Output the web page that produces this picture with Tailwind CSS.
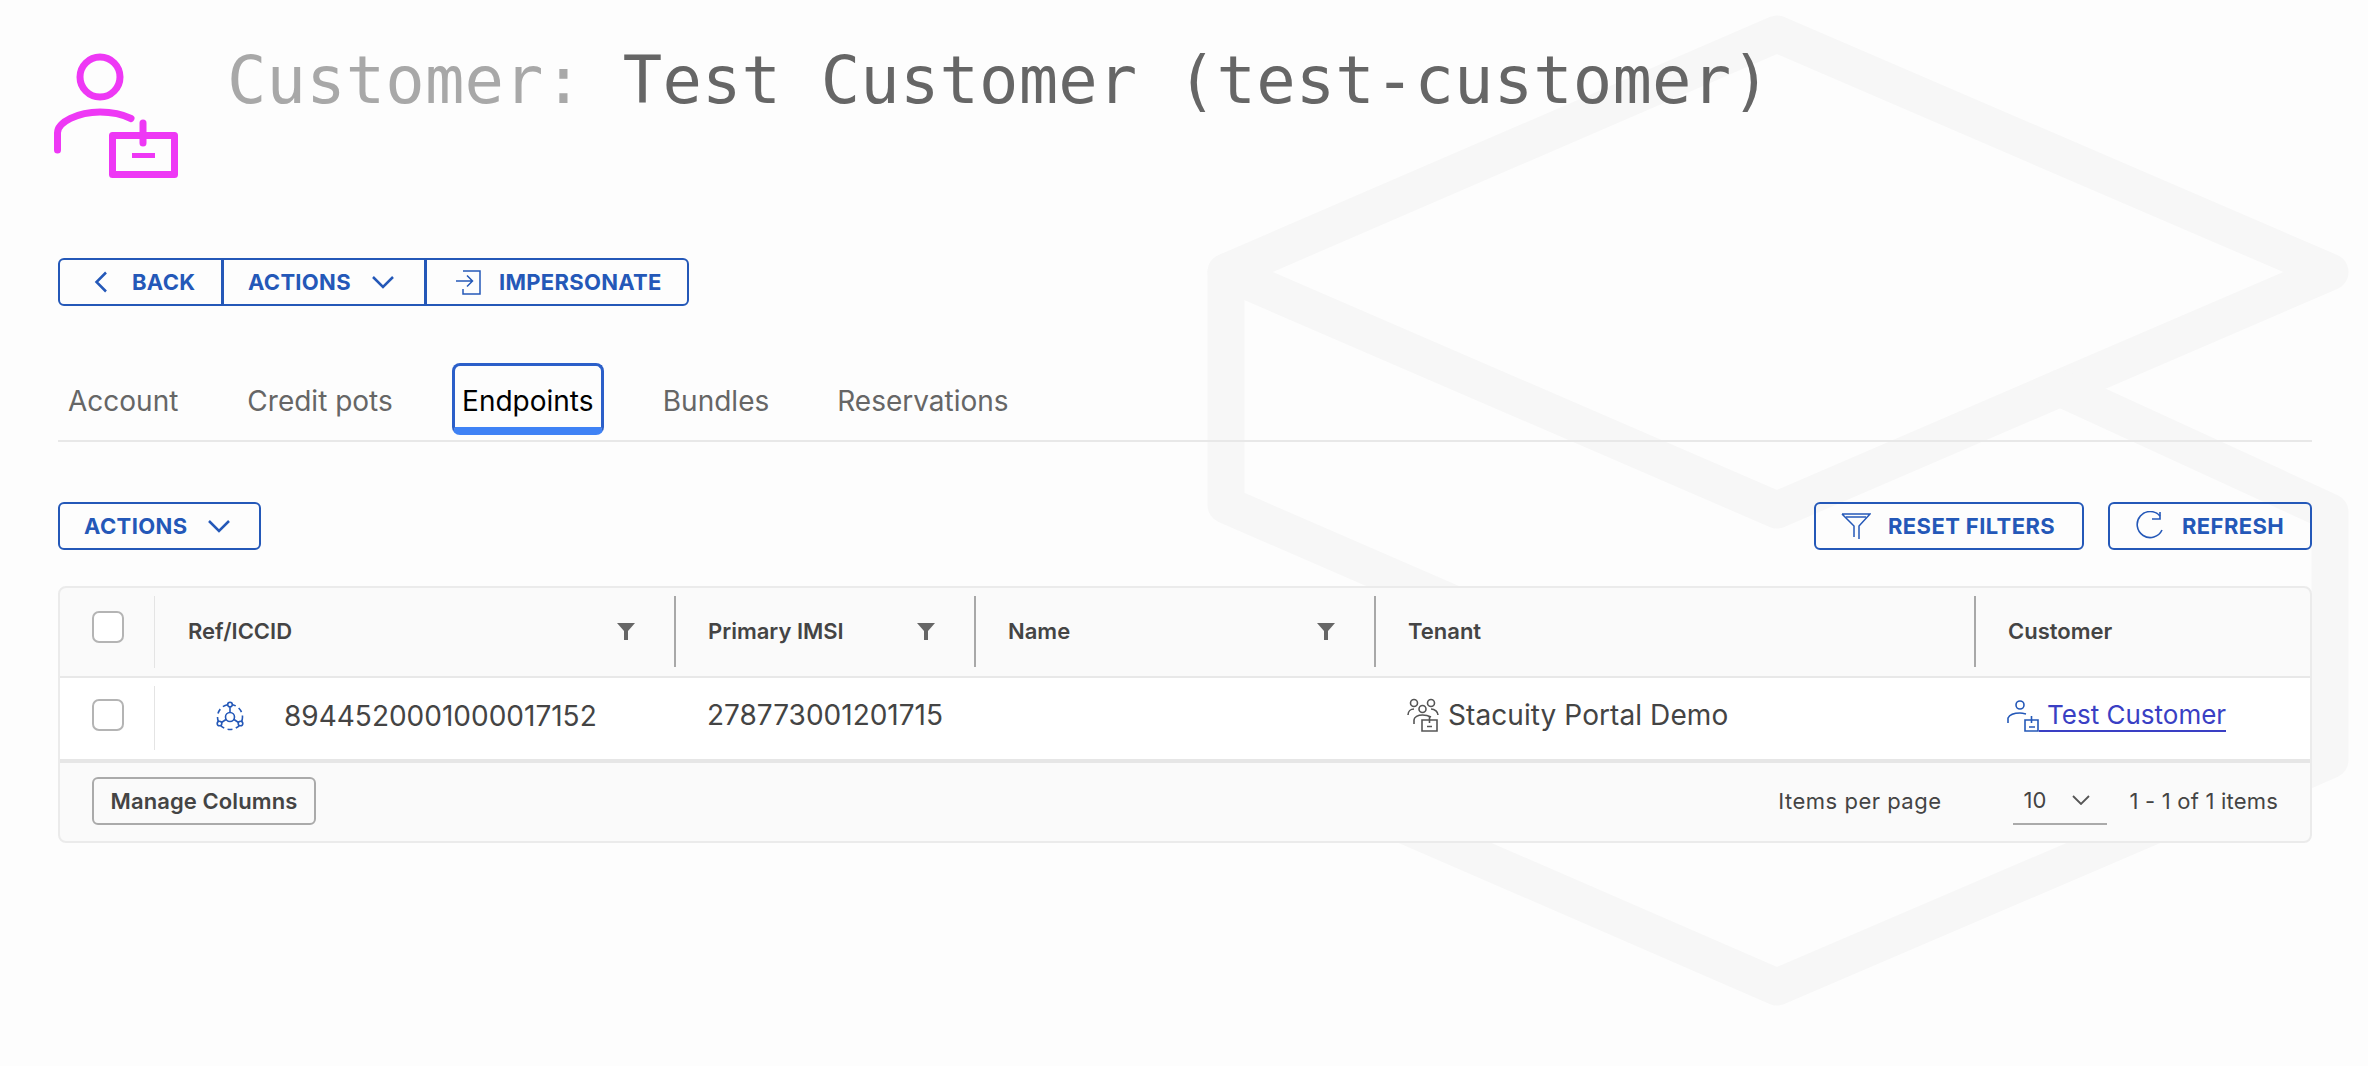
<!DOCTYPE html>
<html lang="en">
<head>
    <meta charset="UTF-8">
    <title>Customer: Test Customer</title>
    <script src="https://cdn.jsdelivr.net/npm/@tailwindcss/browser@4"></script>
</head>
<body class="relative w-[2368px] h-[1066px] overflow-hidden bg-[#fdfdfd] text-[#444] font-['Inter','Liberation_Sans',sans-serif]">

    <!-- Watermark logo behind the page -->
    <svg class="absolute left-0 top-0" width="2368" height="1066" viewBox="0 0 2368 1066" fill="none" stroke="#f7f7f7" stroke-width="37" stroke-linejoin="round" stroke-linecap="round">
        <path d="M1777 34 L2330 272 L1777 510 L1226 272 Z"/>
        <path d="M1226 272 V505 L1500 624"/>
        <path d="M2060 388 L2330 512 V760 L2250 795"/>
        <path d="M1330 793 L1777 987 L2230 793"/>
    </svg>

    <div class="relative">
        <!-- Title -->
        <header class="flex h-[200px] pl-[30px] pt-[30px]">
            <svg width="170" height="170" viewBox="0 0 170 170" fill="none" stroke="#ee38f5" stroke-width="7" stroke-linecap="round" class="shrink-0">
                <circle cx="70" cy="47" r="20"/>
                <path d="M27.500 120 V103 C27.500 92 48 82 70 82 C81 82 92 84 101 88.500"/>
                <path d="M82.500 105.500 H144.500 V144.500 H82.500 Z" stroke-linejoin="round"/>
                <path d="M113 93 V113"/>
                <path d="M102 125.500 H125" stroke-linecap="butt" stroke-width="5"/>
            </svg>
            <h1 class="ml-[27px] mt-[15px] h-[70px] font-['DejaVu_Sans_Mono',monospace] text-[65.500px] leading-[70px] tracking-[0.15px] whitespace-nowrap text-[#666]"><span class="text-[#a8a8a8]">Customer:</span> Test Customer (test-customer)</h1>
        </header>

        <main class="pl-[58px] pr-[56px]">
            <!-- Button group -->
            <div class="mt-[58px] flex h-[48px] w-[631px] rounded-[6px] border-2 border-[#2458b8] text-[22px] font-bold tracking-[0.3px] text-[#2458b8]">
                <button class="flex w-[161px] items-center pl-[33px]">
                    <svg width="16" height="22" viewBox="0 0 16 22" fill="none" stroke="currentColor" stroke-width="2.5"><path d="M13 1.5 L3.5 11 L13 20.5"/></svg>
                    <span class="ml-[23px]">BACK</span>
                </button>
                <button class="flex w-[203px] items-center border-l-3 border-[#2458b8] pl-[24px]">
                    <span>ACTIONS</span>
                    <svg class="ml-[20px]" width="24" height="14" viewBox="0 0 24 14" fill="none" stroke="currentColor" stroke-width="2.5"><path d="M2 2 L12 12 L22 2"/></svg>
                </button>
                <button class="flex flex-1 items-center border-l-3 border-[#2458b8] pl-[28px]">
                    <svg width="26" height="26" viewBox="0 0 26 26" fill="none" stroke="currentColor" stroke-width="1.5"><path d="M8 2 H25 V25 H8 V20"/><path d="M1 12 H17 M12 6.5 L17.5 12 L12 17.5"/></svg>
                    <span class="ml-[18px]">IMPERSONATE</span>
                </button>
            </div>

            <!-- Tabs -->
            <nav class="mt-[57px] flex h-[79px] items-start border-b-2 border-[#e8e8e8] text-[28px] text-[#666]">
                <a class="ml-[10px] mt-[17px]">Account</a>
                <a class="ml-[69px] mt-[17px]">Credit pots</a>
                <a class="ml-[59px] flex h-[72px] w-[152px] items-start justify-center rounded-[8px] border-3 border-b-[8px] border-[#2b5fc9] border-b-[#3f82f5] pt-[14px] text-black">Endpoints</a>
                <a class="ml-[59px] mt-[17px]">Bundles</a>
                <a class="ml-[68px] mt-[17px]">Reservations</a>
            </nav>

            <!-- Toolbar -->
            <div class="mt-[60px] flex h-[48px] justify-between text-[22px] font-bold tracking-[0.4px] text-[#2458b8]">
                <button class="flex w-[203px] items-center rounded-[6px] border-2 border-[#2458b8] pl-[24px]">
                    <span>ACTIONS</span>
                    <svg class="ml-[19px]" width="24" height="14" viewBox="0 0 24 14" fill="none" stroke="currentColor" stroke-width="2.5"><path d="M2 2 L12 12 L22 2"/></svg>
                </button>
                <div class="flex gap-[24px]">
                    <button class="flex w-[270px] items-center rounded-[6px] border-2 border-[#2458b8] pl-[25px]">
                        <svg width="30" height="28" viewBox="0 0 30 28" fill="none" stroke="currentColor" stroke-width="1.5"><path d="M1 2 H29 L18 14 V27 M1 2 L13 14 V25"/><path d="M5 5 H25"/></svg>
                        <span class="ml-[17px]">RESET FILTERS</span>
                    </button>
                    <button class="flex w-[204px] items-center rounded-[6px] border-2 border-[#2458b8] pl-[25px]">
                        <svg width="30" height="30" viewBox="0 0 30 30" fill="none" stroke="currentColor" stroke-width="1.6"><path d="M25 5 A13 13 0 1 0 27 19"/><path d="M25 1 V8 H17"/></svg>
                        <span class="ml-[17px]">REFRESH</span>
                    </button>
                </div>
            </div>

            <!-- Table -->
            <section class="mt-[36px] h-[257px] overflow-hidden rounded-[8px] border-2 border-[#ebebeb] bg-[#fafafa]">
                <div class="grid h-[90px] grid-cols-[95px_519px_300px_400px_600px_1fr] border-b-2 border-[#e8e8e8] text-[22px] font-semibold">
                    <div class="mt-[8px] flex h-[72px] items-start border-r border-[#e4e4e4] pl-[32px] pt-[15px]">
                        <span class="block h-[32px] w-[32px] rounded-[7px] border-2 border-[#b4b4b4] bg-white"></span>
                    </div>
                    <div class="mt-[8px] flex h-[71px] items-center justify-between pl-[33px] pr-[39px]">
                        <span>Ref/ICCID</span>
                        <svg width="18" height="17" viewBox="0 0 18 17" fill="#666"><path d="M0 0 H18 L11 8 V17 H7 V8 Z"/></svg>
                    </div>
                    <div class="mt-[8px] flex h-[71px] items-center justify-between border-l-2 border-[#a8a8a8] pl-[32px] pr-[39px]">
                        <span>Primary IMSI</span>
                        <svg width="18" height="17" viewBox="0 0 18 17" fill="#666"><path d="M0 0 H18 L11 8 V17 H7 V8 Z"/></svg>
                    </div>
                    <div class="mt-[8px] flex h-[71px] items-center justify-between border-l-2 border-[#a8a8a8] pl-[32px] pr-[39px]">
                        <span>Name</span>
                        <svg width="18" height="17" viewBox="0 0 18 17" fill="#666"><path d="M0 0 H18 L11 8 V17 H7 V8 Z"/></svg>
                    </div>
                    <div class="mt-[8px] flex h-[71px] items-center border-l-2 border-[#a8a8a8] pl-[32px]">Tenant</div>
                    <div class="mt-[8px] flex h-[71px] items-center border-l-2 border-[#a8a8a8] pl-[32px]">Customer</div>
                </div>

                <div class="grid h-[85px] grid-cols-[95px_519px_300px_400px_600px_1fr] border-b-4 border-[#e6e6e6] bg-white text-[28px]">
                    <div class="mt-[8px] flex h-[64px] items-start border-r border-[#e4e4e4] pl-[32px] pt-[13px]">
                        <span class="block h-[32px] w-[32px] rounded-[7px] border-2 border-[#b4b4b4] bg-white"></span>
                    </div>
                    <div class="flex h-[76px] items-center pl-[61px]">
                        <svg width="28" height="30" viewBox="0 0 28 30" fill="none" stroke="#2458b8" stroke-width="1.6">
                            <circle cx="14" cy="16" r="12.500" stroke-dasharray="5 3.500"/>
                            <circle cx="14" cy="16" r="4.500"/>
                            <circle cx="14" cy="3.500" r="2.300" fill="#fff"/><circle cx="3.500" cy="22.500" r="2.300" fill="#fff"/><circle cx="24.500" cy="22.500" r="2.300" fill="#fff"/>
                            <path d="M14 6 V11.500 M5.500 21.500 L10 18.500 M22.500 21.500 L18 18.500"/>
                        </svg>
                        <span class="ml-[40px]">8944520001000017152</span>
                    </div>
                    <div class="flex h-[73px] items-center pl-[33px]">278773001201715</div>
                    <div></div>
                    <div class="flex h-[73px] items-center pl-[33px]">
                        <svg width="32" height="34" viewBox="0 0 32 34" fill="none" stroke="#555" stroke-width="1.6">
                            <circle cx="7" cy="5" r="3.500"/><circle cx="24" cy="5" r="3.500"/><circle cx="15.500" cy="11" r="3.500"/>
                            <path d="M1 17 C1 13 4 11 7 11 M24 11 C28 11 31 14 31 17 M7 26 V22 C7 19 11 17 15.500 17 C19 17 22 18 24 19"/>
                            <path d="M15 22 H30 V33 H15 Z M22.500 18 V25 M20 28.500 H25"/>
                        </svg>
                        <span class="ml-[9px] tracking-[0.08px]">Stacuity Portal Demo</span>
                    </div>
                    <a class="flex h-[60px] items-start pl-[33px] pt-[22px] text-[26px] text-[#3a3fc4]">
                        <svg class="shrink-0" width="32" height="32" viewBox="0 0 32 32" fill="none" stroke="#2458b8" stroke-width="1.6">
                            <circle cx="13" cy="5" r="4"/><path d="M1 23 V18 C3 14 8 13 13 13 C15 13 17 13.500 19 14"/><path d="M18 20 H31 V31 H18 Z M24.500 16 V23 M22 27 H28"/>
                        </svg>
                        <span class="h-[32px] border-b-2 border-[#3a3fc4] pl-[8px] leading-[30px]">Test Customer</span>
                    </a>
                </div>

                <div class="flex h-[76px] items-center pl-[32px] pr-[32px] text-[22px]">
                    <button class="h-[48px] w-[224px] rounded-[6px] border-2 border-[#aaa] font-semibold tracking-[0.1px] text-[#444]">Manage Columns</button>
                    <span class="ml-auto tracking-[0.5px]">Items per page</span>
                    <div class="ml-[71px] flex h-[48px] w-[94px] items-center border-b-2 border-[#aaa] pl-[11px]">
                        <span>10</span>
                        <svg class="ml-[26px]" width="18" height="10" viewBox="0 0 18 10" fill="none" stroke="#555" stroke-width="1.8"><path d="M1 1 L9 9 L17 1"/></svg>
                    </div>
                    <span class="ml-[23px] tracking-[0.2px]">1 - 1 of 1 items</span>
                </div>
            </section>
        </main>
    </div>
</body>
</html>
